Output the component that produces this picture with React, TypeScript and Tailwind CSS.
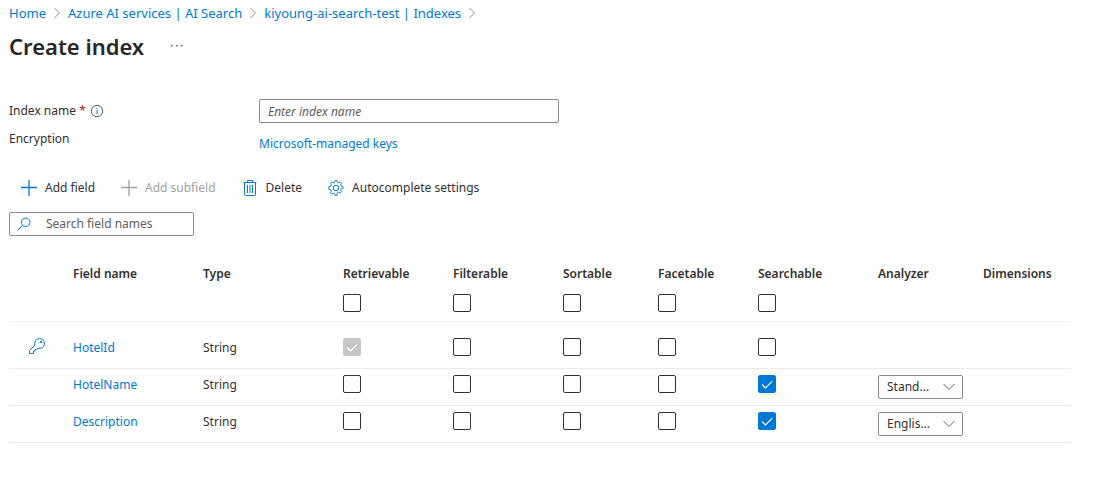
import { useState } from "react";
import type { ReactNode } from "react";

const flags = ["Retrievable", "Filterable", "Sortable", "Facetable", "Searchable"];

const fields = [
  { name: "HotelId", type: "String", isKey: true, checked: ["Retrievable"], locked: ["Retrievable"], analyzer: "" },
  { name: "HotelName", type: "String", isKey: false, checked: ["Searchable"], locked: [], analyzer: "Stand..." },
  { name: "Description", type: "String", isKey: false, checked: ["Searchable"], locked: [], analyzer: "Englis..." },
];

function Chevron() {
  return (
    <svg viewBox="0 0 6 12" className="h-3 w-1.5 shrink-0" fill="none" stroke="#8a8886" aria-hidden="true">
      <path d="M.6 1.2 5.4 6 .6 10.8" />
    </svg>
  );
}

function PlusIcon() {
  return (
    <svg viewBox="0 0 16 16" className="size-4" fill="none" stroke="currentColor" strokeWidth="1.3" aria-hidden="true">
      <path d="M8 0v16M0 7.500h16" />
    </svg>
  );
}

function TrashIcon() {
  return (
    <svg viewBox="0 0 16 16" className="size-4" fill="none" stroke="currentColor" aria-hidden="true">
      <path d="M1.5 2.5h13M5.5 2.5v-2h5v2M2.5 2.5v12q0 1 1 1h9q1 0 1-1v-12M5.5 5v8M8 5v8M10.5 5v8" />
    </svg>
  );
}

function GearIcon() {
  return (
    <svg viewBox="0 0 16 16" className="size-4" fill="none" stroke="currentColor" strokeLinejoin="round" aria-hidden="true">
      <path d="M7 .6h2l.3 1.7 1.5.6 1.4-1 1.4 1.4-1 1.4.6 1.5 1.9.3v2l-1.9.3-.6 1.5 1 1.4-1.4 1.4-1.4-1-1.5.6L9 15.4H7l-.3-1.7-1.5-.6-1.4 1-1.4-1.4 1-1.4-.6-1.5L.9 9.5V6.500l1.900-.3.6-1.500-1-1.400 1.400-1.400 1.400 1 1.500-.6z" strokeWidth=".9" />
      <circle cx="8" cy="8" r="2.800" />
    </svg>
  );
}

function KeyIcon() {
  return (
    <svg viewBox="0 0 16 16" className="size-4" fill="none" stroke="#0078d4" strokeLinejoin="round" aria-hidden="true">
      <path d="M10.500.6a4.900 4.900 0 1 1-1.600 9.500L7.500 11.500H6V13H4.500v2.400h-4v-2.900l5.400-5.400A4.900 4.900 0 0 1 10.500.6z" />
      <circle cx="12" cy="4" r=".7" fill="#0078d4" />
    </svg>
  );
}

function CommandButton({ icon, children, disabled }: { icon: ReactNode; children: ReactNode; disabled?: boolean }) {
  return (
    <button
      type="button"
      disabled={disabled}
      className="flex h-6 items-center gap-2 px-3 text-[#323130] disabled:text-[#a19f9d]"
    >
      <span className={disabled ? "text-[#a19f9d]" : "text-[#0078d4]"}>{icon}</span>
      {children}
    </button>
  );
}

function Checkbox({ label, initial, disabled }: { label: string; initial?: boolean; disabled?: boolean }) {
  const [on, setOn] = useState(Boolean(initial));
  return (
    <span className="grid size-[18px]">
      <input
        type="checkbox"
        aria-label={label}
        checked={on}
        disabled={disabled}
        onChange={() => setOn(!on)}
        className="peer col-start-1 row-start-1 size-[18px] appearance-none rounded-xs border border-[#323130] bg-white checked:border-[#0078d4] checked:bg-[#0078d4] disabled:border-[#c8c6c4] disabled:bg-[#c8c6c4]"
      />
      <svg
        viewBox="0 0 18 18"
        className="pointer-events-none invisible col-start-1 row-start-1 size-[18px] peer-checked:visible"
        fill="none"
        stroke="white"
        strokeWidth="1.1"
        aria-hidden="true"
      >
        <path d="m4 9.500 3.500 3.500 6.800-6.800" />
      </svg>
    </span>
  );
}

export default function App() {
  return (
    <main className="pr-[26px] pl-[9px] font-['Noto_Sans','Open_Sans',sans-serif] text-[12px] leading-5 text-[#323130]">
      <nav aria-label="Breadcrumb" className="flex h-[26px] items-center gap-2 text-[13px] text-[#0078d4]">
        <a href="#home">Home</a>
        <Chevron />
        <a href="#search">Azure AI services | AI Search</a>
        <Chevron />
        <a href="#indexes">kiyoung-ai-search-test | Indexes</a>
        <Chevron />
      </nav>

      <header className="flex h-10 items-center gap-[26px]">
        <h1 className="text-[22px] leading-8 font-semibold text-[#292827]">Create index</h1>
        <button type="button" aria-label="More" className="flex h-4 items-center">
          <svg viewBox="0 0 14 4" className="h-1 w-3.5" fill="#605e5c" aria-hidden="true">
            <path d="M1 1h1.500v1.500H1zM6 1h1.500v1.500H6zM11 1h1.500v1.500H11z" />
          </svg>
        </button>
      </header>

      <form className="mt-[33px]">
        <div className="flex h-6 items-center">
          <div className="flex w-[250px] items-center gap-1">
            <label htmlFor="index-name">
              Index name <span className="text-[#a4262c]">*</span>
            </label>
            <svg viewBox="0 0 14 14" className="size-3.5" fill="none" stroke="#605e5c" aria-hidden="true">
              <circle cx="7" cy="7" r="5.700" />
              <path d="M7 6v4M7 4v1" stroke="#0078d4" />
            </svg>
          </div>
          <input
            id="index-name"
            type="text"
            placeholder="Enter index name"
            className="h-6 w-[300px] rounded-xs border border-[#8a8886] px-2 placeholder:text-[#605e5c] placeholder:italic"
          />
        </div>
        <div className="mt-1.5 flex">
          <span className="w-[250px]">Encryption</span>
          <a href="#keys" className="pt-[5px] text-[#0078d4]">
            Microsoft-managed keys
          </a>
        </div>
      </form>

      <div role="toolbar" aria-label="Field commands" className="mt-[22px] flex gap-0.5">
        <CommandButton icon={<PlusIcon />}>Add field</CommandButton>
        <CommandButton icon={<PlusIcon />} disabled>
          Add subfield
        </CommandButton>
        <CommandButton icon={<TrashIcon />}>Delete</CommandButton>
        <CommandButton icon={<GearIcon />}>Autocomplete settings</CommandButton>
      </div>

      <label className="mt-3 flex h-6 w-[185px] items-center rounded-xs border border-[#8a8886] pl-[7px]">
        <svg viewBox="0 0 14 14" className="mr-[15px] size-3.5 shrink-0" fill="none" stroke="#0078d4" aria-hidden="true">
          <circle cx="8.700" cy="5.300" r="4.300" />
          <path d="M5.600 8.400.6 13.400" />
        </svg>
        <input
          type="text"
          aria-label="Search field names"
          placeholder="Search field names"
          className="min-w-0 flex-1 outline-none placeholder:text-[#605e5c]"
        />
      </label>

      <table className="mt-7 w-full table-fixed border-collapse text-left">
        <colgroup>
          <col className="w-[64px]" />
          <col className="w-[130px]" />
          <col className="w-[140px]" />
          <col className="w-[110px]" />
          <col className="w-[110px]" />
          <col className="w-[95px]" />
          <col className="w-[100px]" />
          <col className="w-[120px]" />
          <col className="w-[105px]" />
          <col className="w-[88px]" />
        </colgroup>
        <thead>
          <tr className="h-[57px] border-b border-[#f3f2f1] align-top [&>th]:p-0 [&>th]:font-semibold">
            <th aria-label="Key" />
            <th>Field name</th>
            <th>Type</th>
            {flags.map((flag) => (
              <th key={flag}>
                <div className="mb-2.5">{flag}</div>
                <Checkbox label={`All ${flag}`} />
              </th>
            ))}
            <th>Analyzer</th>
            <th>Dimensions</th>
          </tr>
        </thead>
        <tbody>
          {fields.map((field) => (
            <tr
              key={field.name}
              className="h-[37px] border-b border-[#edebe9] align-top first:h-[47px] [&>td]:pt-1.5 first:[&>td]:pt-4"
            >
              <td className="pl-5">{field.isKey && <KeyIcon />}</td>
              <td>
                <a href={`#${field.name}`} className="text-[#0078d4]">
                  {field.name}
                </a>
              </td>
              <td>{field.type}</td>
              {flags.map((flag) => (
                <td key={flag}>
                  <Checkbox
                    label={`${field.name} ${flag}`}
                    initial={field.checked.includes(flag)}
                    disabled={field.locked.includes(flag)}
                  />
                </td>
              ))}
              <td>
                {field.analyzer && (
                  <span className="grid h-6 w-[85px] items-center">
                    <select
                      aria-label={`${field.name} Analyzer`}
                      className="col-start-1 row-start-1 h-6 w-full appearance-none rounded-xs border border-[#8a8886] bg-white pl-2"
                    >
                      <option>{field.analyzer}</option>
                    </select>
                    <svg
                      viewBox="0 0 12 8"
                      className="pointer-events-none col-start-1 row-start-1 mr-2 h-2 w-3 justify-self-end"
                      fill="none"
                      stroke="#605e5c"
                      aria-hidden="true"
                    >
                      <path d="m.5 1 5.500 5.500L11.500 1" />
                    </svg>
                  </span>
                )}
              </td>
              <td />
            </tr>
          ))}
        </tbody>
      </table>
    </main>
  );
}
